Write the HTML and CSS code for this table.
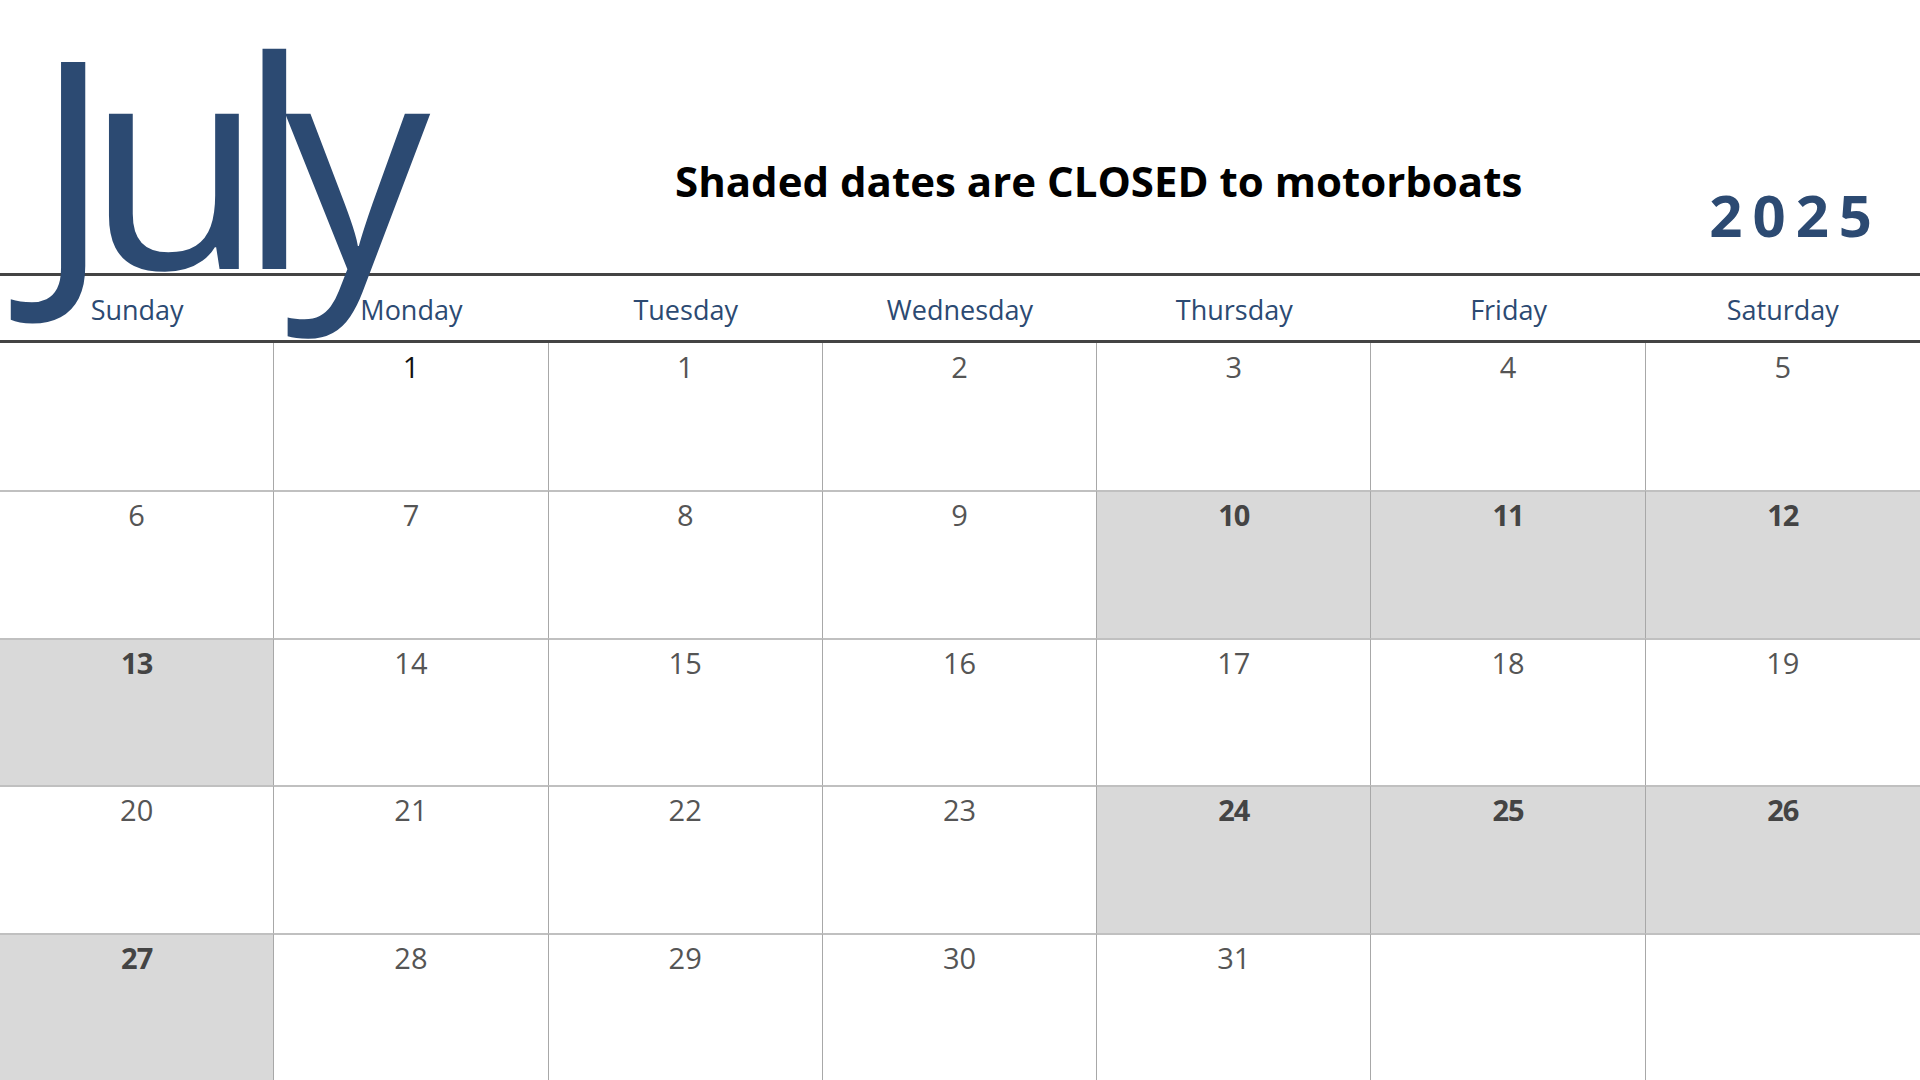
FILE: index.html
```html
<!DOCTYPE html>
<html lang="en">
<head>
<meta charset="utf-8">
<title>July 2025</title>
<link rel="stylesheet" href="styles.css">
</head>
<body>
<div class="page">
  <header class="top">
    <div class="month">July</div>
    <div class="note">Shaded dates are CLOSED to motorboats</div>
    <div class="year">2025</div>
  </header>
  <div class="weekdays">
    <div class="wd">Sunday</div>
    <div class="wd">Monday</div>
    <div class="wd">Tuesday</div>
    <div class="wd">Wednesday</div>
    <div class="wd">Thursday</div>
    <div class="wd">Friday</div>
    <div class="wd">Saturday</div>
  </div>
  <div class="grid">
    <div class="cell"></div>
    <div class="cell dark">1</div>
    <div class="cell">1</div>
    <div class="cell">2</div>
    <div class="cell">3</div>
    <div class="cell">4</div>
    <div class="cell">5</div>

    <div class="cell">6</div>
    <div class="cell">7</div>
    <div class="cell">8</div>
    <div class="cell">9</div>
    <div class="cell shaded">10</div>
    <div class="cell shaded">11</div>
    <div class="cell shaded">12</div>

    <div class="cell shaded">13</div>
    <div class="cell">14</div>
    <div class="cell">15</div>
    <div class="cell">16</div>
    <div class="cell">17</div>
    <div class="cell">18</div>
    <div class="cell">19</div>

    <div class="cell">20</div>
    <div class="cell">21</div>
    <div class="cell">22</div>
    <div class="cell">23</div>
    <div class="cell shaded">24</div>
    <div class="cell shaded">25</div>
    <div class="cell shaded">26</div>

    <div class="cell shaded">27</div>
    <div class="cell">28</div>
    <div class="cell">29</div>
    <div class="cell">30</div>
    <div class="cell">31</div>
    <div class="cell"></div>
    <div class="cell"></div>
  </div>
</div>
</body>
</html>
```

FILE: styles.css
```css
html, body {
  margin: 0;
  padding: 0;
  background: #ffffff;
}

body {
  font-family: "Open Sans", "Liberation Sans", sans-serif;
}

.page {
  width: 1920px;
  height: 1080px;
  display: flex;
  flex-direction: column;
  overflow: hidden;
}

.top {
  height: 273px;
  flex: none;
  display: flex;
  align-items: flex-start;
}

.month {
  position: relative;
  z-index: 2;
  flex: none;
  width: 641px;
  padding-left: 34px;
  margin-top: 12px;
  font-size: 290px;
  line-height: 290px;
  height: 290px;
  letter-spacing: -26px;
  color: #2c4a72;
  font-weight: 400;
}

.note {
  flex: none;
  margin-top: 160px;
  font-size: 42px;
  line-height: 42px;
  font-weight: 700;
  color: #000000;
}

.year {
  margin-left: auto;
  margin-top: 186px;
  padding-right: 38px;
  font-size: 58px;
  line-height: 58px;
  font-weight: 700;
  letter-spacing: 10px;
  color: #2c4a72;
}

.weekdays {
  flex: none;
  display: grid;
  grid-template-columns: repeat(7, 1fr);
  border-top: 3px solid #444444;
  border-bottom: 3px solid #444444;
  height: 64px;
}

.wd {
  text-align: center;
  font-size: 27px;
  line-height: 62px;
  padding-top: 3px;
  color: #2c4a72;
}

.grid {
  flex: 1;
  display: grid;
  grid-template-columns: repeat(7, 1fr);
  grid-template-rows: repeat(5, 1fr);
}

.cell {
  border-right: 1px solid #a8a8a8;
  border-top: 2px solid #c0c0c0;
  text-align: center;
  padding-top: 5px;
  font-size: 29px;
  line-height: 36px;
  color: #555555;
  font-weight: 400;
}

.cell:nth-child(-n+7) {
  border-top: none;
  padding-top: 6px;
}

.cell:nth-child(7n) {
  border-right: none;
}

.cell.dark {
  color: #111111;
}

.cell.shaded {
  background: #d9d9d9;
  font-weight: 700;
  color: #444444;
  letter-spacing: -1px;
}
```
